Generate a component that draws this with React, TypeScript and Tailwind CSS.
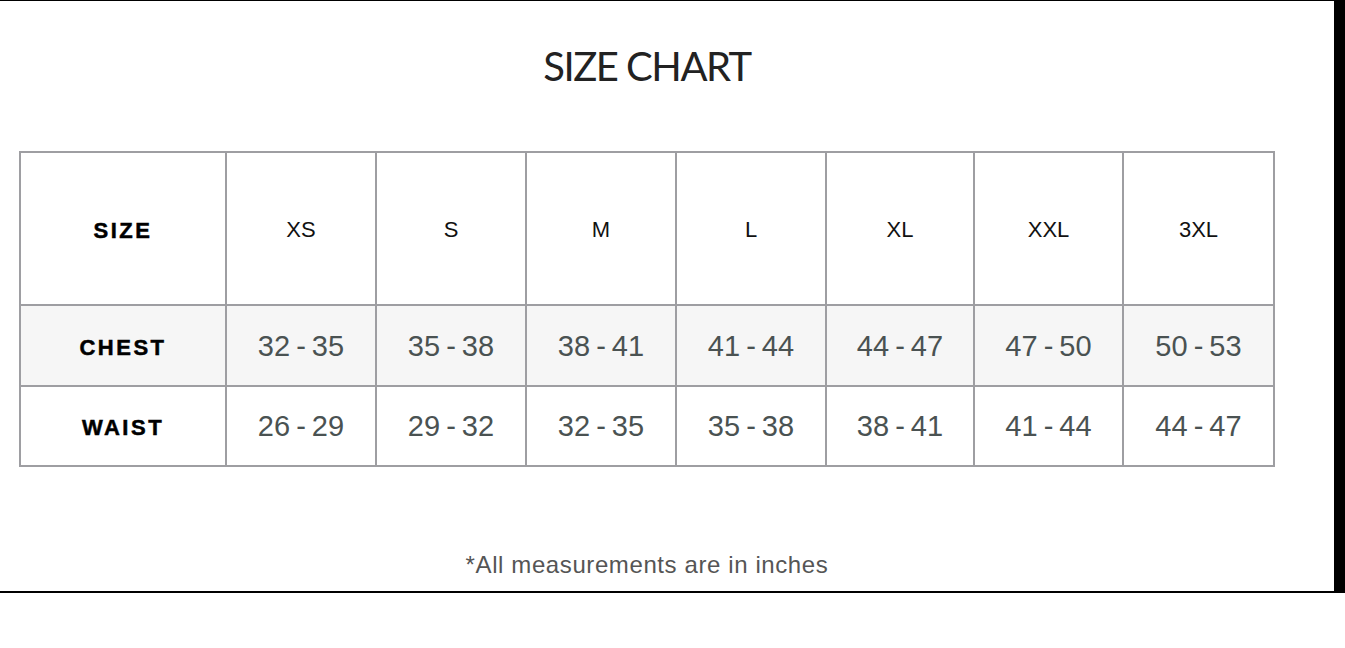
const sizes = ["XS", "S", "M", "L", "XL", "XXL", "3XL"];

const rows = [
  { label: "CHEST", values: ["32 - 35", "35 - 38", "38 - 41", "41 - 44", "44 - 47", "47 - 50", "50 - 53"], bg: "bg-[#f6f6f6]" },
  { label: "WAIST", values: ["26 - 29", "29 - 32", "32 - 35", "35 - 38", "38 - 41", "41 - 44", "44 - 47"], bg: "bg-white" },
];

export default function App() {
  return (
    <div className="w-[1345px] h-[648px] bg-white font-['Liberation_Sans',Arial,sans-serif]">
      <div className="w-[1345px] h-[593px] border-t border-b-2 border-r-[11px] border-black flex flex-col pl-[19px]">
        <div className="w-[1256px] h-[150px] pt-[41px]">
          <h1 className="text-center text-[40px] leading-[48px] text-[#222] font-['Lato',sans-serif] tracking-[-1.5px]">
            SIZE CHART
          </h1>
        </div>

        <div className="w-[1256px] grid grid-cols-[204px_148px_148px_148px_148px_146px_147px_149px] grid-rows-[151px_79px_78px] gap-[2px] border-2 border-[#9e9ea2] bg-[#9e9ea2]">
          <div className="bg-white flex items-center justify-center pt-[4px] text-[22px] font-bold tracking-[2.5px] text-black [-webkit-text-stroke:0.5px_black]">
            SIZE
          </div>
          {sizes.map((s) => (
            <div key={s} className="bg-white flex items-center justify-center pt-[2px] text-[22px] text-[#111]">
              {s}
            </div>
          ))}
          {rows.map((row) => (
            <>
              <div key={row.label} className={`${row.bg} flex items-center justify-center pt-[3px] text-[22px] font-bold tracking-[2.5px] text-black [-webkit-text-stroke:0.5px_black]`}>
                {row.label}
              </div>
              {row.values.map((v, i) => (
                <div key={row.label + i} className={`${row.bg} flex items-center justify-center pt-[2px] text-[29px] [word-spacing:-2px] text-[#4a5252]`}>
                  {v}
                </div>
              ))}
            </>
          ))}
        </div>

        <p className="w-[1256px] mt-[84px] text-center text-[24px] leading-[28px] tracking-[0.6px] text-[#555]">
          *All measurements are in inches
        </p>
      </div>
    </div>
  );
}
